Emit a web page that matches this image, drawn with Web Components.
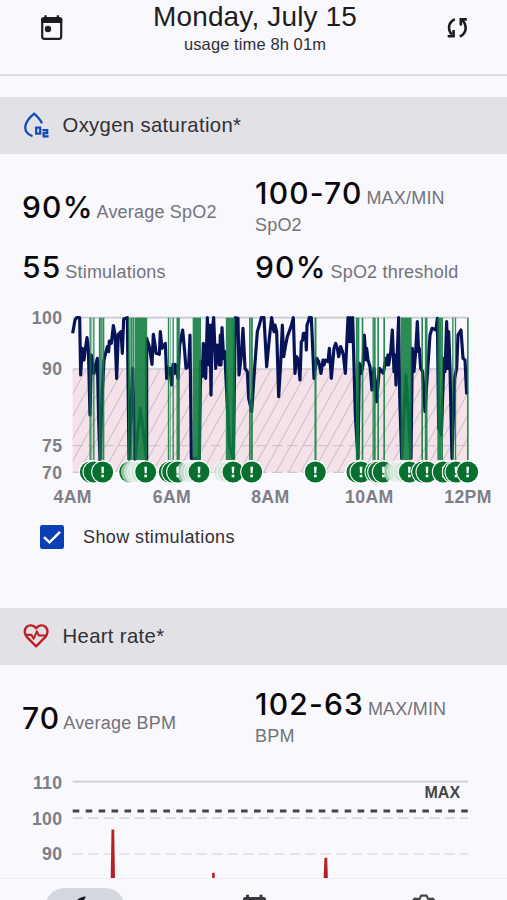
<!DOCTYPE html>
<html lang="en">
<head>
<meta charset="utf-8">
<title>Sleep report</title>
<style>
  body {
    margin: 0;
    background: #f9f8fd;
    font-family: "Liberation Sans", Arial, sans-serif;
    color: #1d1d20;
  }
</style>
</head>
<body>
<sleep-report></sleep-report>

<script>
class ReportHeader extends HTMLElement {
  constructor() {
    super();
    this.attachShadow({ mode: "open" });
    this.shadowRoot.innerHTML = `
      <style>
        :host {
          display: grid;
          grid-template-columns: 103px 1fr 100px;
          box-sizing: border-box;
          height: 76px;
          border-bottom: 2px solid #dedde3;
        }
        svg { display: block; justify-self: center; margin-top: 13px; }
        .title { text-align: center; }
        .date { font-size: 28px; line-height: 33px; letter-spacing: 0.15px; white-space: nowrap; }
        .usage { font-size: 16.5px; line-height: 20px; margin-top: 1px; color: #303034; letter-spacing: 0.1px; }
      </style>
      <svg width="30" height="30" viewBox="0 0 30 30">
        <rect x="5.2" y="5" width="19" height="20.8" rx="2" fill="none" stroke="#1d1d20" stroke-width="2.2"/>
        <path d="M4.2 5h21v5h-21zM7.4 2.2h2.3v4H7.4zM19.7 2.2H22v4h-2.3z" fill="#1d1d20"/>
        <circle cx="11" cy="16" r="3.2" fill="#1d1d20"/>
      </svg>
      <div class="title">
        <div class="date"><slot name="date"></slot></div>
        <div class="usage"><slot name="usage"></slot></div>
      </div>
      <svg width="30" height="30" viewBox="0 0 30 30" fill="none" stroke="#1d1d20" stroke-width="2.6">
        <path d="M12.8 6.2C6.3 9.2 5.3 16 9.8 21.6M17.8 23.6C25 20 25.2 12.5 20.2 7.2"/>
        <path d="M5.7 23.2H11.6V17M24.8 6.4H18.8V12.6"/>
      </svg>
    `;
  }
}

const ICONS = {
  oxygen: `
    <g fill="none" stroke="#1148b8" stroke-width="2.2">
      <path d="M9.5 24.2C4.2 22.3 2.2 19 2.2 15.3C2.2 10.2 7.8 4.4 11.1 1.6C14.3 4.4 17.4 7.5 18.9 11.3"/>
      <rect x="13.2" y="15.6" width="4" height="6"/>
      <path d="M19.4 18.2H24.2V21.2H20.6V24.4H25.6"/>
    </g>`,
  heart: `
    <g fill="none" stroke="#bd2028" stroke-width="2.4" stroke-linejoin="round">
      <path d="M13.1 23.3L4 14.2C1.2 11.1 1 6.7 3.4 4.2C6.2 1.4 10.6 1.9 13.1 5.3C15.6 1.9 20 1.4 22.8 4.2C25.2 6.7 25 11.1 22.2 14.2Z"/>
      <path d="M3 11.9H8.4L10.7 15.6L13.9 8.4L15.9 12.5H23.3" stroke-width="2.1"/>
    </g>`
};

class SectionTitle extends HTMLElement {
  constructor() {
    super();
    this.attachShadow({ mode: "open" });
  }

  connectedCallback() {
    this.shadowRoot.innerHTML = `
      <style>
        :host {
          display: flex;
          align-items: center;
          gap: 12.5px;
          height: 57px;
          padding-left: 23px;
          background: #e2e1e6;
          color: #303034;
          font-size: 20.3px;
          letter-spacing: 0.35px;
        }
      </style>
      <svg width="27" height="27" viewBox="0 0 27 27">${ICONS[this.getAttribute("icon")]}</svg>
      <span><slot></slot></span>
    `;
  }
}

class StatValue extends HTMLElement {
  constructor() {
    super();
    this.attachShadow({ mode: "open" });
  }

  connectedCallback() {
    this.shadowRoot.innerHTML = `
      <style>
        :host {
          display: block;
          color: #737379;
          font-size: 18px;
          line-height: 27px;
          letter-spacing: 0.2px;
          white-space: nowrap;
        }
        b {
          font: 500 30px/34px Inter, sans-serif;
          letter-spacing: 1.2px;
          color: #09090b;
          margin-right: -1.4px;
        }
      </style>
      <b>${this.getAttribute("value")}</b> <slot></slot>
    `;
  }
}

// Traces use three units per pixel. Each segment has its own start on the x axis.
const SPO2 = [
  { start: 60, points: "158,85 165,45 170,38 179,38 182,210 187,130 192,165 197,125 201,98 205,130 210,330 214,150 222,205 227,180 232,160 236,345 240,463 245,300 252,165 258,140 262,125 266,140 268,108 274,115 280,62 285,88 290,220 295,88 303,80 307,145 311,42 322,38 327,463 338,190 345,463 361,310 380,463 380,100 388,125 391,145 396,178 400,88 406,125 408,145 418,148 421,80 426,130 436,115 440,220 444,190" },
  { start: 510, points: "0,190 5,240 9,178 13,205 16,178 24,220 29,120 38,75 44,140 48,190 56,185 60,90 64,460 68,460 88,460 92,170 97,215 100,115 107,220 112,38 117,180 120,60 123,270 126,90 131,38 137,190 142,120 148,180 151,90 153,180 156,68 161,160 164,140 168,220 178,420 190,460 196,38 204,40 207,210 213,160 219,70 225,190 232,200 236,280 245,320 252,215 262,80 268,60 274,38 282,38 290,185 298,100 305,38 312,80 315,60 320,80 326,275 332,175 337,60 341,155 347,120 352,95 363,65 370,38 375,205 380,155 385,165 390,225 394,110 398,105 400,85 407,85 409,135 411,60 415,50 418,38 424,38 432,220 440,160 446,170 453,205 459,165 462,180 466,165 474,170 478,130" },
  { start: 990, points: "4,220 12,130 17,115 22,130 26,155 32,125 36,135 40,150 46,205 54,38 58,110 61,38 65,110 68,38 76,330 84,460 88,175 94,205 99,180 103,90 108,165 110,130 114,165 120,185 126,255 132,190 140,290 148,190 160,205 168,160 170,180 174,150 176,180 182,140 187,75 192,200 195,150 198,240 206,38 209,270 215,460 228,210 243,460 247,130 252,200 257,140 262,50 266,140 268,130 272,190 278,200 285,320 292,210 300,90 306,70 318,75 322,40 326,370 334,390 342,160 345,200 350,50 353,190 356,80 360,190 366,460 374,220 380,190 384,90 393,75 399,160 405,165 410,268" }
];

// [x, width] of each stimulation bar
const BARS = [
  [270,3],[275,1],[281,3],[299,5],[305,3],[310,4],[386,4],[394,6],[400,2],[422,37],
  [505,3],[510,1],[519,3],[534,9],[590,24],[691,27],[749,4],[755,5],[946,5],
  [1070,5],[1075,4],[1087,4],[1119,3],[1124,4],[1134,4],[1152,4],[1218,32],
  [1266,4],[1278,7],[1318,12],[1326,4],[1358,3],[1366,3],[1403,4]
];

// [x, opacity] of each marker, drawn left to right
const MARKERS = [
  [271],[282],[308],[389],[398,0.12],[407,0.12],[415,0.12],[424,0.12],[437],
  [508],[518],[533],[564,0.12],[574,0.12],[585,0.12],[597],[673,0.12],[684,0.12],[699],[755],
  [946],[1071],[1083],[1128],[1136],[1150],[1186,0.12],[1195,0.12],[1204,0.12],[1213,0.12],
  [1228],[1268],[1281],[1330],[1360],[1368],[1403]
];

class OxygenChart extends HTMLElement {
  constructor() {
    super();
    this.attachShadow({ mode: "open" });

    const line = SPO2.map((s) =>
      s.points
        .split(" ")
        .map((p) => {
          const [x, y] = p.split(",").map(Number);
          return `${x + s.start},${y}`;
        })
        .join(" ")
    ).join(" ");

    let hatch = "";
    for (let x = -60; x < 1420; x += 37) {
      hatch += `M${x} 502l172 -312`;
    }

    const bars = BARS.map(([x, w]) => `<rect x="${x - w / 2}" y="38" width="${w + 1}" height="427"/>`).join("");
    const markers = MARKERS.map(([x, o = 1]) => `
      <g transform="translate(${x} 501)">
        <circle r="34.5" fill="#fff" opacity="${o < 1 ? 0.65 : 1}"/>
        <circle r="31.5" fill="#08702f" opacity="${o}"/>
        <path d="M-4 -16h8l-1 20h-6zM-4 8h8v8h-8z" fill="#fff"/>
      </g>`).join("");

    this.shadowRoot.innerHTML = `
      <style>
        :host { display: block; height: 210px; }
        svg { display: block; }
        text {
          font-family: inherit;
          font-weight: bold;
          font-size: 53px;
          letter-spacing: 1px;
          fill: #7e7e86;
        }
      </style>
      <svg width="507" height="210" viewBox="0 0 1521 630">
        <clipPath id="low"><rect x="218" y="192" width="1185" height="310"/></clipPath>
        <rect x="218" y="192" width="1185" height="310" fill="#f4e2e8"/>
        <path d="${hatch}" clip-path="url(#low)" stroke="#c5bac6" stroke-width="3"/>
        <path d="M218 38H1403M218 192H1403" stroke="#cbcad0" stroke-width="5"/>
        <path d="M218 422H1403M218 502H1403" stroke="#cfc5ce" stroke-width="4" stroke-dasharray="31 15"/>
        <polyline points="${line}" fill="none" stroke="#071356" stroke-width="9.5" stroke-linejoin="round"/>
        <g fill="#0f7c3e" opacity="0.88">${bars}</g>
        ${markers}
        <g text-anchor="end">
          <text x="187" y="57">100</text>
          <text x="187" y="210">90</text>
          <text x="187" y="442">75</text>
          <text x="187" y="521">70</text>
        </g>
        <g text-anchor="middle">
          <text x="218" y="594">4AM</text>
          <text x="516" y="594">6AM</text>
          <text x="811" y="594">8AM</text>
          <text x="1108" y="594">10AM</text>
          <text x="1404" y="594">12PM</text>
        </g>
      </svg>
    `;
  }
}

class CheckOption extends HTMLElement {
  constructor() {
    super();
    this.attachShadow({ mode: "open" });
    this.shadowRoot.innerHTML = `
      <style>
        :host {
          display: flex;
          align-items: center;
          gap: 19px;
          height: 24px;
          padding-left: 40px;
          color: #303034;
          font-size: 18px;
          letter-spacing: 0.4px;
        }
      </style>
      <svg width="24" height="24" viewBox="0 0 24 24">
        <rect width="24" height="24" rx="2.2" fill="#0a3fb5"/>
        <path d="M4 12.2L9.5 17.3L20 6.8" fill="none" stroke="#fff" stroke-width="2.5"/>
      </svg>
      <span><slot></slot></span>
    `;
  }
}

class HeartChart extends HTMLElement {
  constructor() {
    super();
    this.attachShadow({ mode: "open" });
    this.shadowRoot.innerHTML = `
      <style>
        :host { display: block; height: 128px; }
        svg { display: block; }
        text { font-family: inherit; font-weight: bold; font-size: 17.7px; letter-spacing: 0.3px; fill: #7e7e86; }
        .max { font-size: 16px; letter-spacing: 0.1px; fill: #454549; }
      </style>
      <svg width="507" height="128" viewBox="0 750 507 128">
        <path d="M72.7 781.7H468" stroke="#cfced4" stroke-width="1.8"/>
        <path d="M72.7 818.2H468" stroke="#cbcad0" stroke-width="1.2" stroke-dasharray="10.3 5.2"/>
        <path d="M72.7 854H468" stroke="#dedde3" stroke-width="1.5" stroke-dasharray="10.3 5.2"/>
        <path d="M72.7 811H468" stroke="#454549" stroke-width="2.8" stroke-dasharray="6.6 6.35"/>
        <g fill="#b52025">
          <path d="M111.5 829.5h2.7L115 879h-4.3z"/>
          <path d="M212.1 872.8h2.6V879h-2.6z"/>
          <path d="M324.5 857.7h2.7l.7 21.3h-4.4z"/>
        </g>
        <g text-anchor="end">
          <text x="62.4" y="788.5">110</text>
          <text x="62.4" y="824.5">100</text>
          <text x="62.4" y="860">90</text>
          <text class="max" x="460.3" y="798">MAX</text>
        </g>
      </svg>
    `;
  }
}

class TabBar extends HTMLElement {
  constructor() {
    super();
    this.attachShadow({ mode: "open" });
    this.shadowRoot.innerHTML = `
      <style>
        :host {
          display: grid;
          grid-template-columns: repeat(3, 1fr);
          justify-items: center;
          box-sizing: border-box;
          height: 22px;
          padding-top: 9px;
          border-top: 1px solid #eeedf3;
          overflow: hidden;
        }
        .active {
          width: 80px;
          height: 40px;
          border-radius: 20px;
          background: #d5d7df;
        }
        svg { display: block; margin: 0 auto; }
      </style>
      <div class="active">
        <svg width="32" height="32" viewBox="0 0 32 32">
          <path d="M17 8.5C12 8.8 8 11 6 15C5 25 11 31 25 25C16 25 11 17 17 8.5Z" fill="#17171b"/>
        </svg>
      </div>
      <svg width="32" height="32" viewBox="0 0 32 32" fill="#39393e">
        <path d="M5 28V11Q5 9 7 9H26Q28 9 28 11V28zM8 6.7h3v4H8zM21.5 6.7h3v4h-3z"/>
      </svg>
      <svg width="32" height="32" viewBox="0 0 32 32" fill="none" stroke="#454549" stroke-width="2.2">
        <path d="M6 12.5L7.8 10.6L12.5 11L14.2 7.6H19.4L21.2 11L25.6 10.6L27.5 12.5"/>
      </svg>
    `;
  }
}

class SleepReport extends HTMLElement {
  constructor() {
    super();
    this.attachShadow({ mode: "open" });
    this.shadowRoot.innerHTML = `
      <style>
        :host {
          display: flex;
          flex-direction: column;
          height: 900px;
          overflow: hidden;
        }
        main { flex: 1; min-height: 0; overflow: hidden; padding-top: 21px; }
        .stats {
          display: grid;
          grid-template-columns: 233px 1fr;
          align-items: center;
          padding-left: 22px;
        }
        .oxygen { grid-template-rows: 61px 34px; row-gap: 13px; height: 151px; padding-top: 23px; box-sizing: border-box; }
        .heart { height: 61px; margin: 22px 0 2px; }
        check-option { margin-top: 10px; }
        .second { margin-top: 59px; }
      </style>
      <report-header>
        <span slot="date">Monday, July 15</span>
        <span slot="usage">usage time 8h 01m</span>
      </report-header>
      <main>
        <section-title icon="oxygen">Oxygen saturation*</section-title>
        <div class="stats oxygen">
          <stat-value value="90%">Average SpO2</stat-value>
          <stat-value value="100-70">MAX/MIN<br>SpO2</stat-value>
          <stat-value value="55">Stimulations</stat-value>
          <stat-value value="90%">SpO2 threshold</stat-value>
        </div>
        <oxygen-chart></oxygen-chart>
        <check-option>Show stimulations</check-option>
        <section-title class="second" icon="heart">Heart rate*</section-title>
        <div class="stats heart">
          <stat-value value="70">Average BPM</stat-value>
          <stat-value value="102-63">MAX/MIN<br>BPM</stat-value>
        </div>
        <heart-chart></heart-chart>
      </main>
      <tab-bar></tab-bar>
    `;
  }
}

customElements.define("report-header", ReportHeader);
customElements.define("section-title", SectionTitle);
customElements.define("stat-value", StatValue);
customElements.define("oxygen-chart", OxygenChart);
customElements.define("check-option", CheckOption);
customElements.define("heart-chart", HeartChart);
customElements.define("tab-bar", TabBar);
customElements.define("sleep-report", SleepReport);
</script>
</body>
</html>
